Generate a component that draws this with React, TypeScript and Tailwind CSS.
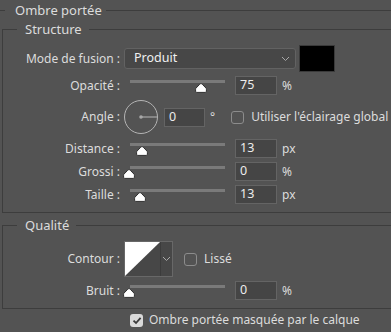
import React from 'react';

const Thumb: React.FC<{ left: number }> = ({ left }) => (
  <svg
    className="absolute top-[7px]"
    style={{ left: left - 6 }}
    width="12"
    height="10"
    viewBox="0 0 12 10"
  >
    <path
      d="M6 0.6 C6.6 0.6 7 1 7.4 1.4 L10.9 5 C11.3 5.4 11.4 5.7 11.4 6.3 V8.3 C11.4 8.9 11 9.4 10.4 9.4 H1.6 C1 9.4 0.6 8.9 0.6 8.3 V6.3 C0.6 5.7 0.7 5.4 1.1 5 L4.6 1.4 C5 1 5.4 0.6 6 0.6 Z"
      fill="#ffffff"
      stroke="#2e2e2e"
      strokeWidth="1"
    />
  </svg>
);

const Slider: React.FC<{ thumb: number }> = ({ thumb }) => (
  <div className="relative w-[111px] h-[19px] shrink-0">
    <div className="absolute left-[6px] top-[4px] w-[95px] h-[3px] bg-[#7a7a7a]" />
    <Thumb left={thumb} />
  </div>
);

const NumberBox: React.FC<{ value: string; className?: string }> = ({ value, className }) => (
  <div
    className={`h-[19px] bg-[#454545] border border-[#646464] flex items-center pl-[4px] text-[12.5px] text-[#ececec] shrink-0 ${className ?? 'w-[42px]'}`}
  >
    {value}
  </div>
);

const Check: React.FC<{ checked?: boolean }> = ({ checked }) => (
  <div
    className={`w-[13px] h-[13px] rounded-[3px] shrink-0 flex items-center justify-center ${
      checked ? 'bg-[#d9d9d9]' : 'border border-[#8c8c8c]'
    }`}
  >
    {checked && (
      <svg width="10" height="9" viewBox="0 0 10 9">
        <path d="M1.5 4.6 L4 7 L8.6 1.8" fill="none" stroke="#3a3a3a" strokeWidth="1.8" />
      </svg>
    )}
  </div>
);

const Chevron: React.FC = () => (
  <svg width="9" height="6" viewBox="0 0 9 6">
    <path d="M1 1 L4.5 4.5 L8 1" fill="none" stroke="#a8a8a8" strokeWidth="1" />
  </svg>
);

const Label: React.FC<{ children: React.ReactNode }> = ({ children }) => (
  <div className="w-[118px] shrink-0 text-right pr-[1px] whitespace-nowrap">{children}</div>
);

const SliderRow: React.FC<{ label: string; thumb: number; value: string; unit: string; className?: string }> = ({
  label,
  thumb,
  value,
  unit,
  className,
}) => (
  <div className={`flex items-center h-[19px] ${className ?? ''}`}>
    <Label>{label}</Label>
    <div className="ml-[3px] flex items-center">
      <Slider thumb={thumb} />
      <NumberBox value={value} />
      <span className="ml-[5px]">{unit}</span>
    </div>
  </div>
);

export default function App() {
  return (
    <div className="w-[391px] h-[332px] overflow-hidden bg-[#535353] text-[#dcdcdc] text-[12px] font-['Noto_Sans',_sans-serif]">
      <fieldset className="border-t border-[#3d3d3d] pl-[2px]">
        <legend className="ml-[3px] pl-[10px] pr-[4px] leading-[20px] text-[13px]">Ombre portée</legend>

        {/* Structure */}
        <fieldset className="border-l border-t border-b border-[#3d3d3d]">
          <legend className="ml-[14px] pl-[8px] pr-[7px] leading-[18px] text-[13px]">Structure</legend>
          <div className="pt-[7px] pb-[8px]">
            <div className="flex items-center h-[27px]">
              <Label>Mode de fusion :</Label>
              <div className="ml-[3px] w-[172px] h-[21px] rounded-[3px] bg-[#474747] border border-[#626262] flex items-center justify-between pl-[9px] pr-[5px] text-[12.5px] text-[#f0f0f0]">
                <span>Produit</span>
                <Chevron />
              </div>
              <div className="ml-[3px] w-[36px] h-[27px] bg-black border border-[#3a3a3a]" />
            </div>

            <SliderRow label="Opacité :" thumb={77} value="75" unit="%" className="mt-[4px]" />

            <div className="flex items-center h-[34px] mt-[5px]">
              <Label>Angle :</Label>
              <div className="ml-[3px] flex items-center">
                <svg width="34" height="34" viewBox="0 0 34 34" className="shrink-0">
                  <circle cx="17" cy="17" r="16.5" fill="none" stroke="#b4b4b4" strokeWidth="1" />
                  <circle cx="17" cy="17" r="1.8" fill="#a8a8a8" />
                  <line x1="17" y1="17" x2="33" y2="17" stroke="#a8a8a8" strokeWidth="1.2" />
                </svg>
                <NumberBox value="0" className="ml-[6px] w-[41px] h-[18px]" />
                <span className="ml-[5px]">°</span>
                <div className="ml-[16px]">
                  <Check />
                </div>
                <span className="ml-[7px] whitespace-nowrap">Utiliser l'éclairage global</span>
              </div>
            </div>

            <SliderRow label="Distance :" thumb={18} value="13" unit="px" className="mt-[5px]" />
            <SliderRow label="Grossi :" thumb={5} value="0" unit="%" className="mt-[4px]" />
            <SliderRow label="Taille :" thumb={16} value="13" unit="px" className="mt-[4px]" />
          </div>
        </fieldset>

        {/* Qualité */}
        <fieldset className="mt-[3px] border-l border-t border-b border-[#3d3d3d]">
          <legend className="ml-[14px] pl-[8px] pr-[7px] leading-[18px] text-[13px]">Qualité</legend>
          <div className="pt-[7px] pb-[8px]">
            <div className="flex items-center h-[36px]">
              <Label>Contour :</Label>
              <div className="ml-[3px] flex h-[36px] border border-[#686868]">
                <svg width="35" height="34" viewBox="0 0 35 34" className="shrink-0">
                  <rect width="35" height="34" fill="#474747" />
                  <path d="M0 0 H35 L0 34 Z" fill="#ffffff" />
                </svg>
                <div className="w-[12px] bg-[#474747] border-l border-[#3c3c3c] flex items-center justify-center">
                  <Chevron />
                </div>
              </div>
              <div className="ml-[11px]">
                <Check />
              </div>
              <span className="ml-[7px]">Lissé</span>
            </div>
            <SliderRow label="Bruit :" thumb={5} value="0" unit="%" className="mt-[4px]" />
          </div>
        </fieldset>

        <div className="flex items-center h-[20px] mt-[1px]">
          <div className="ml-[128px]">
            <Check checked />
          </div>
          <span className="ml-[6px] whitespace-nowrap">Ombre portée masquée par le calque</span>
        </div>
      </fieldset>
    </div>
  );
}
